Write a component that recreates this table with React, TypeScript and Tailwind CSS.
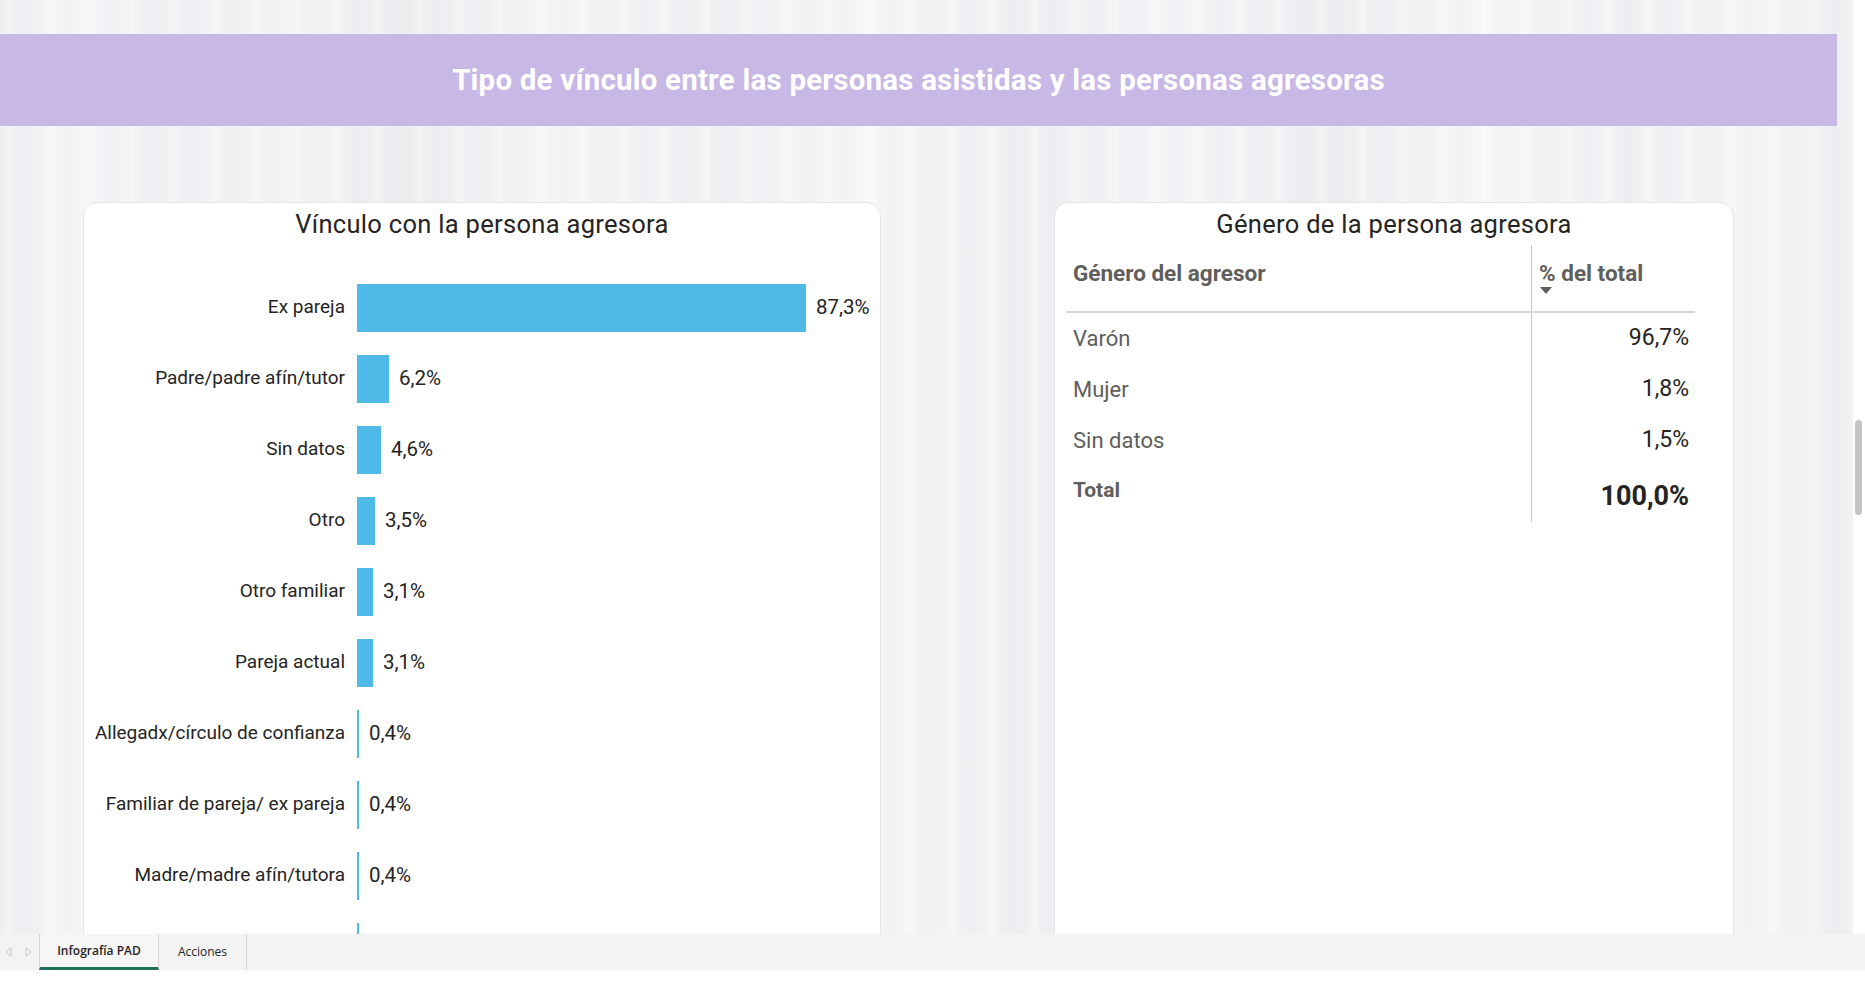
import React from "react";

interface BarRow {
  label: string;
  value: number;
}

const bars: BarRow[] = [
  { label: "Ex pareja", value: 87.3 },
  { label: "Padre/padre afín/tutor", value: 6.2 },
  { label: "Sin datos", value: 4.6 },
  { label: "Otro", value: 3.5 },
  { label: "Otro familiar", value: 3.1 },
  { label: "Pareja actual", value: 3.1 },
  { label: "Allegadx/círculo de confianza", value: 0.4 },
  { label: "Familiar de pareja/ ex pareja", value: 0.4 },
  { label: "Madre/madre afín/tutora", value: 0.4 },
];

const genero = [
  { label: "Varón", value: "96,7%" },
  { label: "Mujer", value: "1,8%" },
  { label: "Sin datos", value: "1,5%" },
];

// px per percentage point, taken from the widest bar
const SCALE = 449 / 87.3;

function pct(v: number): string {
  return v.toFixed(1).replace(".", ",") + "%";
}

function BarChartCard() {
  return (
    <div className="w-[798px] h-[800px] shrink-0 rounded-[14px] border border-[#e4e4e4] bg-white">
      <div className="pt-[6px] text-center text-[25.5px] leading-[30px] tracking-[0.3px] text-[#252423]">
        Vínculo con la persona agresora
      </div>
      <div className="mt-[33px] flex flex-col">
        {bars.map((b) => (
          <div key={b.label} className="flex h-[71px] items-center">
            <div className="w-[261px] text-right text-[19px] text-[#252423]">{b.label}</div>
            <div
              className="ml-[12px] h-[48px] bg-[#4fb9e8]"
              style={{ width: Math.max(2, Math.round(b.value * SCALE)) }}
            />
            <div className="ml-[10px] text-[20.5px] text-[#252423]">{pct(b.value)}</div>
          </div>
        ))}
        <div className="flex h-[71px] items-center">
          <div className="w-[261px]" />
          <div className="ml-[12px] h-[48px] w-[2px] bg-[#4fb9e8]" />
        </div>
      </div>
    </div>
  );
}

function GeneroCard() {
  return (
    <div className="ml-[173px] w-[680px] h-[800px] shrink-0 rounded-[14px] border border-[#e4e4e4] bg-white">
      <div className="pt-[6px] text-center text-[25.5px] leading-[30px] tracking-[0.3px] text-[#252423]">
        Género de la persona agresora
      </div>
      <div className="ml-[11px] mt-[6px] w-[629px]">
        <div className="flex h-[68px] border-b-2 border-[#d9d9d9]">
          <div className="w-[465px] pl-[7px] pt-[14px] text-[22.5px] font-bold leading-[28px] text-[#605e5c]">
            Género del agresor
          </div>
          <div className="flex-1 border-l border-[#c8c8c8] pl-[7px] pt-[14px]">
            <div className="text-[22.5px] font-bold leading-[28px] text-[#605e5c]">% del total</div>
            <svg width="12" height="8" viewBox="0 0 12 8" className="ml-[1px]">
              <path d="M0 0 L12 0 L6 7 Z" fill="#605e5c" />
            </svg>
          </div>
        </div>
        {genero.map((g) => (
          <div key={g.label} className="flex h-[51px]">
            <div className="flex w-[465px] items-center pl-[7px] text-[22px] text-[#605e5c]">{g.label}</div>
            <div className="flex flex-1 items-center justify-end border-l border-[#c8c8c8] pr-[6px] text-[23px] text-[#252423]">
              {g.value}
            </div>
          </div>
        ))}
        <div className="flex h-[56px]">
          <div className="w-[465px] pl-[7px] pt-[10px] text-[21px] font-bold leading-[28px] text-[#605e5c]">Total</div>
          <div className="flex-1 border-l border-[#c8c8c8] pr-[6px] pt-[14px] text-right text-[27px] font-bold leading-[32px] text-[#252423]">
            100,0%
          </div>
        </div>
      </div>
    </div>
  );
}

function TabBar() {
  return (
    <div className="flex h-[36px] shrink-0 items-stretch bg-[#f3f3f3] font-['Open_Sans',sans-serif] text-[12px] text-[#252423]">
      <div className="flex w-[39px] items-center gap-[13px] pl-[5px]">
        <svg width="7" height="10" viewBox="0 0 7 10">
          <path d="M6 1 L1 5 L6 9 Z" fill="none" stroke="#c6c6c6" strokeWidth="1" />
        </svg>
        <svg width="7" height="10" viewBox="0 0 7 10">
          <path d="M1 1 L6 5 L1 9 Z" fill="none" stroke="#c6c6c6" strokeWidth="1" />
        </svg>
      </div>
      <div className="flex w-[120px] items-center justify-center border-x border-[#d6d6d6] border-b-[3px] border-b-[#1f6f5c] bg-[#f6f6f6] font-semibold">
        Infografía PAD
      </div>
      <div className="flex w-[88px] items-center justify-center border-r border-[#d6d6d6]">Acciones</div>
    </div>
  );
}

export default function App() {
  return (
    <div className="flex h-[993px] w-[1865px] flex-col overflow-hidden bg-white font-[Roboto,sans-serif]">
      <div className="flex h-[934px] shrink-0 overflow-hidden">
        <div className="w-[1853px] shrink-0 overflow-hidden bg-[#eff0f2] bg-[repeating-linear-gradient(90deg,rgba(255,255,255,0)_0px,rgba(255,255,255,0.3)_9px,rgba(255,255,255,0)_16px,rgba(228,231,235,0.2)_27px,rgba(255,255,255,0)_41px),linear-gradient(90deg,#eceef0_0%,#f5f6f7_4%,#eef0f2_9%,#f3f4f5_15%,#ebedef_22%,#f4f5f6_30%,#eef0f2_38%,#f5f6f7_47%,#edeff1_55%,#f3f4f6_63%,#eceef0_72%,#f5f6f7_80%,#eef0f2_88%,#f4f5f6_95%,#eceef0_100%)] pt-[34px]">
          <div className="flex h-[92px] w-[1837px] items-center justify-center bg-[#c8b8e6]">
            <span className="text-[29.5px] font-bold tracking-[0.2px] text-white">
              Tipo de vínculo entre las personas asistidas y las personas agresoras
            </span>
          </div>
          <div className="mt-[76px] flex pl-[83px]">
            <BarChartCard />
            <GeneroCard />
          </div>
        </div>
        <div className="w-[12px] shrink-0 bg-white pl-[2px] pt-[420px]">
          <div className="h-[95px] w-[7px] rounded-full bg-[#c4c4c4]" />
        </div>
      </div>
      <TabBar />
      <div className="flex-1 bg-white" />
    </div>
  );
}
